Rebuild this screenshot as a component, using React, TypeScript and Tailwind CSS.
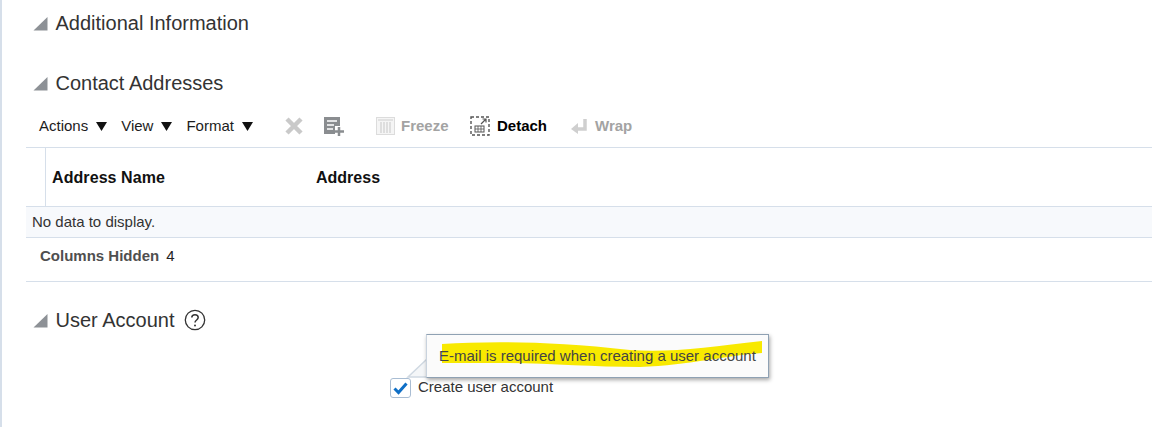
import { ReactNode } from 'react';

function SectionHeader({ title, children }: { title: string; children?: ReactNode }) {
  return (
    <div className="flex items-center h-7 pl-[31px]">
      <svg width="15" height="15" viewBox="0 0 15 15" className="mr-[8px]">
        <path d="M0.5 14.5 L14.5 1 V14.5 Z" fill="#8d9196" />
      </svg>
      <h2 className="text-[20px] text-[#333333] font-normal -ml-[0.5px]">{title}</h2>
      {children}
    </div>
  );
}

function MenuItem({ label }: { label: string }) {
  return (
    <div className="flex items-center gap-[8px] text-[15px] text-[#1c1c1c]">
      <span>{label}</span>
      <svg width="11" height="9" viewBox="0 0 11 9">
        <path d="M0 0 H11 L5.5 9 Z" fill="#111111" />
      </svg>
    </div>
  );
}

export default function App() {
  return (
    <div className="w-[1152px] h-[427px] overflow-hidden bg-white border-l-2 border-[#d6dfea] relative font-['Liberation_Sans',Arial,sans-serif]">
      <div className="pt-[9px]">
        <SectionHeader title="Additional Information" />
      </div>
      <div className="pt-[32px]">
        <SectionHeader title="Contact Addresses" />
      </div>

      {/* toolbar */}
      <div className="flex items-center h-[28px] mt-[15px] pl-[37px]">
        <MenuItem label="Actions" />
        <div className="ml-[14px]"><MenuItem label="View" /></div>
        <div className="ml-[14px]"><MenuItem label="Format" /></div>
        <svg width="20" height="20" viewBox="0 0 20 20" className="ml-[31px]">
          <path d="M3 3 L17 17 M17 3 L3 17" stroke="#c9c9c9" strokeWidth="4.5" />
        </svg>
        <svg width="22" height="22" viewBox="0 0 22 22" className="ml-[19px]">
          <path d="M1 2 H17 V11 H12 V19 H1 Z" fill="#8a8d90" />
          <path d="M4 6 H14 M4 10 H11 M4 14 H10" stroke="#ffffff" strokeWidth="1.5" />
          <path d="M16 12 V21 M12 16.5 H21" stroke="#8a8d90" strokeWidth="2.5" />
        </svg>
        <svg width="20" height="18" viewBox="0 0 20 18" className="ml-[31px]">
          <rect x="0.5" y="0.5" width="18" height="17" fill="#f5f5f5" stroke="#dcdcdc" />
          <path d="M2 3 H17 M5 5 V16 M8 5 V16 M11 5 V16 M14 5 V16" stroke="#cfcfcf" strokeWidth="1.2" />
        </svg>
        <span className="ml-[5px] text-[15px] font-bold text-[#a3a3a3]">Freeze</span>
        <svg width="20" height="20" viewBox="0 0 20 20" className="ml-[21px]">
          <rect x="1" y="1" width="18" height="18" fill="none" stroke="#555555" strokeWidth="1.4" strokeDasharray="3 2" />
          <path d="M11 8 L16 3 M12.5 3 H16 V6.5" fill="none" stroke="#555555" strokeWidth="1.2" />
          <rect x="5" y="10" width="9" height="6" fill="none" stroke="#555555" />
          <path d="M5 13 H14 M8 10 V16 M11 10 V16" stroke="#555555" strokeWidth="0.8" />
        </svg>
        <span className="ml-[7.5px] text-[15px] font-bold text-black">Detach</span>
        <svg width="17" height="16" viewBox="0 0 17 16" className="ml-[24px]">
          <path d="M14 1 V11 H6" fill="none" stroke="#cfcfcf" strokeWidth="3.5" />
          <path d="M7 5 V16 L0 11 Z" fill="#cfcfcf" />
        </svg>
        <span className="ml-[7px] text-[15px] font-bold text-[#a3a3a3]">Wrap</span>
      </div>

      {/* table */}
      <div className="ml-[24px] mt-[7px]">
        <div className="flex h-[60px] border-y border-[#d6dfea]">
          <div className="w-[20px] border-r border-[#d6dfea]" />
          <div className="w-[270px] pl-[6px] pt-[2px] flex items-center text-[16px] font-bold text-[#111111] tracking-[0.08px]">Address Name</div>
          <div className="flex items-center pt-[2px] text-[16px] font-bold text-[#111111]">Address</div>
        </div>
        <div className="h-[31px] pl-[6px] flex items-center bg-[#f7f9fc] border-b border-[#d6dfea] text-[15px] text-[#333333]">
          No data to display.
        </div>
        <div className="h-[44px] pl-[14px] pb-[7px] flex items-center border-b border-[#d6dfea] text-[15px]">
          <span className="font-bold text-[#4f4f4f]">Columns Hidden</span>
          <span className="ml-[7px] text-[#222222]">4</span>
        </div>
      </div>

      <div className="pt-[24px]">
        <SectionHeader title="User Account">
          <svg width="22" height="22" viewBox="0 0 22 22" className="ml-[10px]">
            <circle cx="11" cy="11" r="9.7" fill="none" stroke="#333333" strokeWidth="1.3" />
            <path d="M7.8 8.6 C7.8 4.8 14.2 4.8 14.2 8.6 C14.2 11 11 11 11 13.6" fill="none" stroke="#333333" strokeWidth="1.5" />
            <circle cx="11" cy="16.4" r="1" fill="#333333" />
          </svg>
        </SectionHeader>
      </div>

      {/* checkbox row */}
      <div className="flex items-center mt-[44px] pl-[388px]">
        <div className="w-[21px] h-[20px] rounded-[3px] border border-[#a9bdd3] bg-white flex items-center justify-center">
          <svg width="15" height="13" viewBox="0 0 15 13">
            <path d="M1.5 6.5 L5.5 10.5 L13.5 1.5" fill="none" stroke="#0f6fc6" strokeWidth="3" />
          </svg>
        </div>
        <span className="ml-[7px] -mt-[2px] text-[15px] text-[#333333]">Create user account</span>
      </div>

      {/* note window */}
      <svg width="24" height="22" viewBox="0 0 24 22" className="absolute left-[404px] top-[358px]">
        <path d="M21 1 L2 19 L23 19 Z" fill="#f4f6f8" stroke="#d0d9e2" strokeWidth="1.5" />
      </svg>
      <div className="absolute left-[424px] top-[334px] w-[343px] h-[44px] bg-[#fbfbfb] border border-[#8fa1b3] border-l-[#c9d3de] shadow-[1px_2px_4px_rgba(0,0,0,0.35)] flex items-center pl-[12px] text-[15px] text-[#444444]">
        <svg width="330" height="34" viewBox="0 0 330 34" className="absolute left-[13px] top-[3px]">
          <path d="M2 6 C50 3 110 3 190 12 C230 15 270 9 322 3 L322 15 C290 17 250 27 200 29 C150 29 110 25 60 25 C40 25 20 25 2 25 Z" fill="#f8e900" />
        </svg>
        <span className="relative">E-mail is required when creating a user account</span>
      </div>
    </div>
  );
}
